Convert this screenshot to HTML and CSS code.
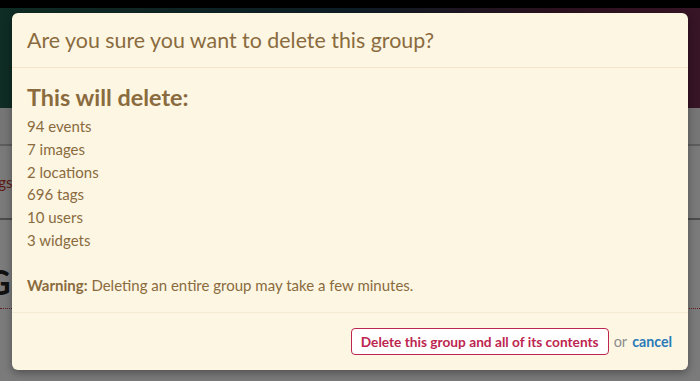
FILE: index.html
```html
<!DOCTYPE html>
<html>
<head>
  <meta charset="utf-8">
  <title>Delete group</title>
  <link rel="stylesheet" href="styles.css">
</head>
<body>
  <div class="page">
    <div class="topbar"></div>
    <div class="masthead">
      <span class="masthead-link">Groups and Events</span>
    </div>
    <div class="subnav"></div>
    <div class="tabs">
      <span class="tab-link">Settings</span>
    </div>
    <div class="content">
      <h2 class="page-title">G</h2>
      <div class="dotted"></div>
    </div>
  </div>

  <div class="backdrop"></div>

  <div class="modal">
    <div class="modal-header">
      <h3 class="modal-title">Are you sure you want to delete this group?</h3>
    </div>
    <div class="modal-body">
      <h4 class="delete-title">This will delete:</h4>
      <ul class="delete-list">
        <li>94 events</li>
        <li>7 images</li>
        <li>2 locations</li>
        <li>696 tags</li>
        <li>10 users</li>
        <li>3 widgets</li>
      </ul>
      <p class="warning"><strong>Warning:</strong> Deleting an entire group may take a few minutes.</p>
    </div>
    <div class="modal-footer">
      <button class="button danger">Delete this group and all of its contents</button>
      <span class="or">or</span>
      <a class="cancel" href="#">cancel</a>
    </div>
  </div>
</body>
</html>
```

FILE: styles.css
```css
:root {
  --cream: #fdf6e3;
  --brown: #8a6b3e;
  --danger: #bd2650;
  --link: #2b7bb9;
  --muted: #8c8c8c;
  --radius: 6px;
}

* {
  margin: 0;
  padding: 0;
  box-sizing: border-box;
}

body {
  width: 700px;
  height: 381px;
  overflow: hidden;
  position: relative;
  font-family: 'Lato', 'Noto Sans', sans-serif;
  background: #f2f2f2;
  color: #333;
}

/* page behind the dialog */
.page {
  height: 381px;
  display: flex;
  flex-direction: column;
}

.topbar {
  height: 8px;
  background: #000;
}

.masthead {
  height: 100px;
  background: linear-gradient(90deg, #1f5a48 0%, #1c3b4e 50%, #5a2340 80%, #6e2a4c 100%);
  display: flex;
  align-items: flex-end;
  padding: 0 0 22px 0;
}

.masthead-link {
  margin-left: -120px;
  color: #ddd;
  font-size: 14px;
}

.subnav {
  height: 38px;
  background: #ececec;
  border-bottom: 2px solid #bbb;
}

.tabs {
  height: 74px;
  background: #f4f4f4;
  border-bottom: 2px solid #999;
  display: flex;
  align-items: center;
}

.tab-link {
  margin-left: -40px;
  color: #c0392b;
  font-size: 15px;
}

.content {
  flex: 1;
  background: #f7f7f7;
  padding-top: 42px;
}

.page-title {
  margin-left: -14px;
  font-size: 34px;
  line-height: 40px;
  font-weight: 700;
  color: #222;
}

.dotted {
  margin-top: 6px;
  border-top: 1px dotted #c0394b;
}

.backdrop {
  position: absolute;
  inset: 0;
  background: rgba(0, 0, 0, 0.5);
}

/* dialog */
.modal {
  position: absolute;
  top: 13px;
  left: 12px;
  width: 676px;
  height: 357px;
  background: var(--cream);
  border-radius: var(--radius);
  box-shadow: 0 3px 8px rgba(0, 0, 0, 0.35);
  color: var(--brown);
  display: flex;
  flex-direction: column;
}

.modal-header {
  height: 55px;
  padding: 0 15px;
  display: flex;
  align-items: center;
  border-bottom: 1px solid #f6e4c8;
}

.modal-title {
  font-size: 21.4px;
  font-weight: 400;
}

.modal-body {
  flex: 1;
  padding: 14px 15px 0;
}

.delete-title {
  font-size: 23.4px;
  font-weight: 700;
  line-height: 30px;
  margin-bottom: 3px;
}

.delete-list {
  list-style: none;
  font-size: 15px;
  line-height: 22.8px;
}

.warning {
  margin-top: 22px;
  font-size: 15px;
  line-height: 22px;
}

.modal-footer {
  height: 58px;
  padding: 0 16px;
  border-top: 1px solid #f5ead2;
  display: flex;
  align-items: center;
  justify-content: flex-end;
  gap: 5px;
}

.button {
  height: 27px;
  padding: 0 9px;
  border-radius: 4px;
  font-family: inherit;
  font-size: 13.7px;
  font-weight: 700;
  cursor: pointer;
}

.button.danger {
  background: #fff;
  border: 1px solid var(--danger);
  color: var(--danger);
}

.or {
  color: var(--muted);
  font-size: 14.5px;
}

.cancel {
  color: var(--link);
  font-weight: 700;
  font-size: 14.2px;
  text-decoration: none;
}
```
